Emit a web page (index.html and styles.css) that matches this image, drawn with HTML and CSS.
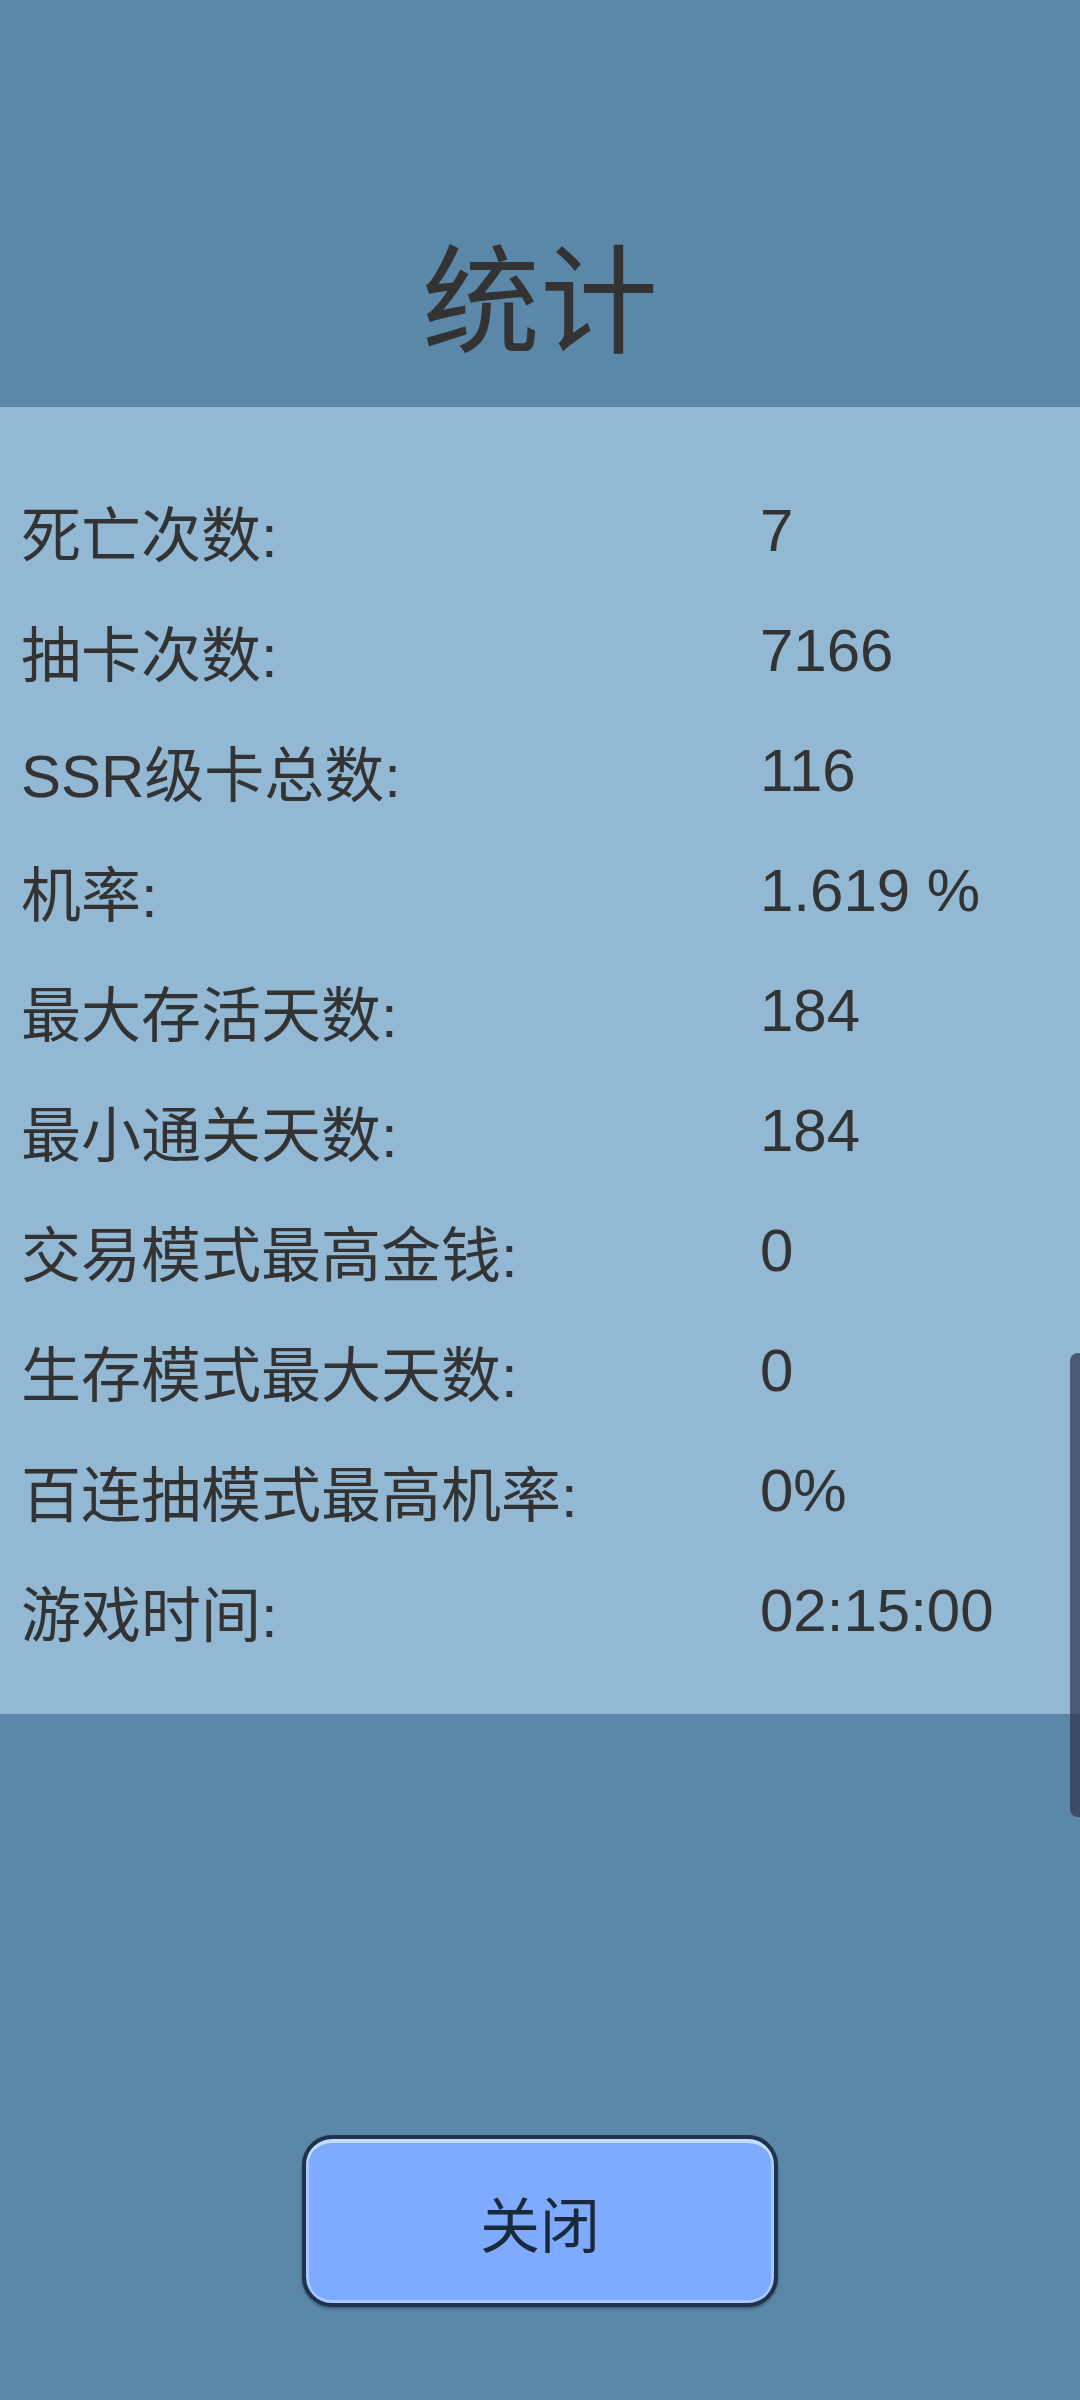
FILE: index.html
```html
<!DOCTYPE html>
<html lang="zh-CN">
<head>
    <meta charset="UTF-8">
    <meta name="viewport" content="width=device-width, initial-scale=1.0">
    <title>统计</title>
    <link rel="stylesheet" href="styles.css">
</head>
<body>
    <div class="header">
        <h1 class="title">统计</h1>
    </div>
    <div class="stats">
        <div class="row"><span class="label">死亡次数:</span><span class="value">7</span></div>
        <div class="row"><span class="label">抽卡次数:</span><span class="value">7166</span></div>
        <div class="row"><span class="label">SSR级卡总数:</span><span class="value">116</span></div>
        <div class="row"><span class="label">机率:</span><span class="value">1.619 %</span></div>
        <div class="row"><span class="label">最大存活天数:</span><span class="value">184</span></div>
        <div class="row"><span class="label">最小通关天数:</span><span class="value">184</span></div>
        <div class="row"><span class="label">交易模式最高金钱:</span><span class="value">0</span></div>
        <div class="row"><span class="label">生存模式最大天数:</span><span class="value">0</span></div>
        <div class="row"><span class="label">百连抽模式最高机率:</span><span class="value">0%</span></div>
        <div class="row"><span class="label">游戏时间:</span><span class="value">02:15:00</span></div>
    </div>
    <div class="footer">
        <button class="close-button">关闭</button>
    </div>
    <div class="scrollbar"></div>
</body>
</html>
```

FILE: styles.css
```css
html, body {
    margin: 0;
    padding: 0;
}

body {
    font-family: "Liberation Sans", "Noto Sans CJK SC", sans-serif;
    background-color: #5b88a8;
    color: #333;
    width: 1080px;
    height: 2400px;
    overflow: hidden;
    position: relative;
}

.header {
    height: 407px;
    box-sizing: border-box;
    padding-top: 244px;
}

.title {
    margin: 0;
    font-size: 118px;
    line-height: 1;
    font-weight: normal;
    text-align: center;
    color: #333;
}

.stats {
    background-color: #92b8d4;
    height: 1307px;
    box-sizing: border-box;
    padding: 63px 0 0 21px;
}

.row {
    display: grid;
    grid-template-columns: 739px auto;
    align-items: center;
    height: 120px;
    font-size: 60px;
}

.footer {
    display: flex;
    justify-content: center;
    padding-top: 421px;
}

.close-button {
    width: 476px;
    height: 172px;
    font-family: "Liberation Sans", "Noto Sans CJK SC", sans-serif;
    font-size: 60px;
    color: #1b2a3a;
    background-color: #7eaaff;
    border: 4px solid #1f344c;
    border-radius: 30px;
    box-shadow: inset 0 4px 0 #c4dcff, inset 3px 0 0 #a9c8ff, inset -3px 0 0 #a9c8ff, inset 0 -3px 0 #a9c8ff, 0 2px 3px rgba(0, 0, 0, 0.3);
    padding: 0;
}

.scrollbar {
    position: absolute;
    right: 0;
    top: 1353px;
    width: 10px;
    height: 464px;
    background-color: rgba(48, 52, 78, 0.72);
    border-radius: 8px 0 0 8px;
}
```
